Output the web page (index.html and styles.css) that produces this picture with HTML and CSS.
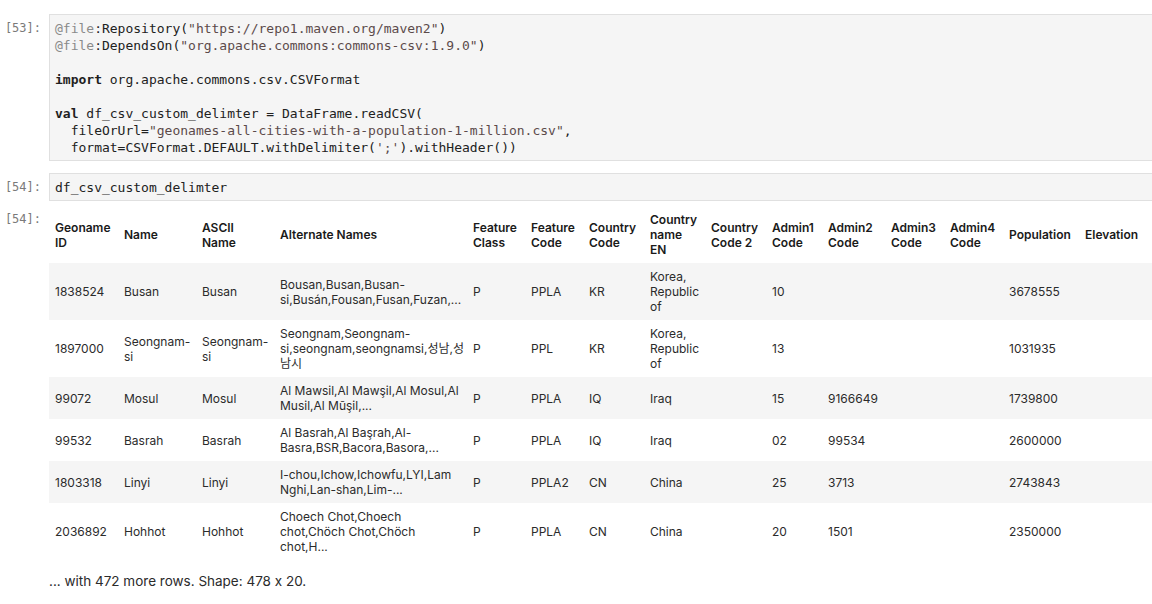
FILE: index.html
```html
<!DOCTYPE html>
<html lang="en">
<head>
<meta charset="utf-8">
<title>Notebook</title>
<link rel="stylesheet" href="styles.css">
</head>
<body>
<div class="notebook">
  <div class="cell">
    <div class="prompt">[53]:</div>
    <div class="input"><pre><span class="meta">@file</span>:Repository(<span class="str">"https://repo1.maven.org/maven2"</span>)
<span class="meta">@file</span>:DependsOn(<span class="str">"org.apache.commons:commons-csv:1.9.0"</span>)

<span class="kw">import</span> org.apache.commons.csv.CSVFormat

<span class="kw">val</span> df_csv_custom_delimter = DataFrame.readCSV(
  fileOrUrl=<span class="str">"geonames-all-cities-with-a-population-1-million.csv"</span>,
  format=CSVFormat.DEFAULT.withDelimiter(<span class="str">';'</span>).withHeader())</pre></div>
  </div>
  <div class="cell">
    <div class="prompt">[54]:</div>
    <div class="input"><pre>df_csv_custom_delimter</pre></div>
  </div>
  <div class="output">
    <div class="prompt out">[54]:</div>
    <div class="output-body">
      <table class="df">
        <colgroup>
          <col class="w69"><col class="w78"><col class="w78"><col class="w193"><col class="w58"><col class="w58"><col class="w61"><col class="w61"><col class="w61"><col class="w56"><col class="w63"><col class="w59"><col class="w59"><col class="w76"><col>
        </colgroup>
        <thead>
          <tr>
            <th>Geoname<br>ID</th><th>Name</th><th>ASCII<br>Name</th><th>Alternate Names</th><th>Feature<br>Class</th><th>Feature<br>Code</th><th>Country<br>Code</th><th>Country<br>name<br>EN</th><th>Country<br>Code 2</th><th>Admin1<br>Code</th><th>Admin2<br>Code</th><th>Admin3<br>Code</th><th>Admin4<br>Code</th><th>Population</th><th>Elevation</th>
          </tr>
        </thead>
        <tbody>
          <tr>
            <td>1838524</td><td>Busan</td><td>Busan</td><td>Bousan,Busan,Busan-<br>si,Busán,Fousan,Fusan,Fuzan,...</td><td>P</td><td>PPLA</td><td>KR</td><td>Korea,<br>Republic<br>of</td><td></td><td>10</td><td></td><td></td><td></td><td>3678555</td><td></td>
          </tr>
          <tr>
            <td>1897000</td><td>Seongnam-<br>si</td><td>Seongnam-<br>si</td><td>Seongnam,Seongnam-<br>si,seongnam,seongnamsi,성남,성<br>남시</td><td>P</td><td>PPL</td><td>KR</td><td>Korea,<br>Republic<br>of</td><td></td><td>13</td><td></td><td></td><td></td><td>1031935</td><td></td>
          </tr>
          <tr>
            <td>99072</td><td>Mosul</td><td>Mosul</td><td>Al Mawsil,Al Mawşil,Al Mosul,Al<br>Musil,Al Mūşil,...</td><td>P</td><td>PPLA</td><td>IQ</td><td>Iraq</td><td></td><td>15</td><td>9166649</td><td></td><td></td><td>1739800</td><td></td>
          </tr>
          <tr>
            <td>99532</td><td>Basrah</td><td>Basrah</td><td>Al Basrah,Al Başrah,Al-<br>Basra,BSR,Bacora,Basora,...</td><td>P</td><td>PPLA</td><td>IQ</td><td>Iraq</td><td></td><td>02</td><td>99534</td><td></td><td></td><td>2600000</td><td></td>
          </tr>
          <tr>
            <td>1803318</td><td>Linyi</td><td>Linyi</td><td>I-chou,Ichow,Ichowfu,LYI,Lam<br>Nghi,Lan-shan,Lim-...</td><td>P</td><td>PPLA2</td><td>CN</td><td>China</td><td></td><td>25</td><td>3713</td><td></td><td></td><td>2743843</td><td></td>
          </tr>
          <tr>
            <td>2036892</td><td>Hohhot</td><td>Hohhot</td><td>Choech Chot,Choech<br>chot,Chöch Chot,Chöch<br>chot,H...</td><td>P</td><td>PPLA</td><td>CN</td><td>China</td><td></td><td>20</td><td>1501</td><td></td><td></td><td>2350000</td><td></td>
          </tr>
        </tbody>
      </table>
      <p class="summary">... with 472 more rows. Shape: 478 x 20.</p>
    </div>
  </div>
</div>
</body>
</html>
```

FILE: styles.css
```css
html, body {
  margin: 0;
  padding: 0;
  background: #ffffff;
  overflow: hidden;
}

.notebook {
  padding-top: 14px;
  display: flex;
  flex-direction: column;
  gap: 12px;
}

.cell {
  display: flex;
  align-items: flex-start;
}

.prompt {
  flex: 0 0 49px;
  box-sizing: border-box;
  padding: 6px 8px 0 0;
  text-align: right;
  font-family: "DejaVu Sans Mono", monospace;
  font-size: 12px;
  line-height: 17px;
  color: #7a7a7a;
}

.input {
  flex: 1 1 auto;
  min-width: 0;
  background: #f5f5f5;
  border: 1px solid #e0e0e0;
  border-right: none;
  padding: 5px 0 4px 5px;
}

.input pre {
  margin: 0;
  font-family: "DejaVu Sans Mono", monospace;
  font-size: 13px;
  line-height: 17px;
  color: #212121;
  white-space: pre;
}

.meta { color: #8a8a8a; }
.str { color: #5b4a4a; }
.kw { font-weight: bold; color: #1f1f1f; }

.output {
  display: flex;
  align-items: flex-start;
  margin-top: -7px;
}

.prompt.out {
  padding-top: 5px;
}

.output-body {
  flex: 1 1 auto;
  min-width: 0;
  overflow: hidden;
}

.df {
  border-collapse: collapse;
  table-layout: fixed;
  width: 100%;
  font-family: Inter, "Noto Sans CJK KR", sans-serif;
  font-feature-settings: "calt" 0;
  font-size: 12px;
  line-height: 15px;
  color: #2b2b2b;
}

.df th, .df td {
  padding: 6px;
  text-align: left;
  vertical-align: middle;
  white-space: nowrap;
}

.df th {
  font-weight: 600;
  color: #1a1a1a;
}

.df tbody tr:nth-child(odd) {
  background: #f5f5f5;
}

.w56 { width: 56px; }
.w58 { width: 58px; }
.w59 { width: 59px; }
.w61 { width: 61px; }
.w63 { width: 63px; }
.w69 { width: 69px; }
.w76 { width: 76px; }
.w78 { width: 78px; }
.w193 { width: 193px; }

.summary {
  margin: 13px 0 0 0;
  font-family: Inter, sans-serif;
  font-feature-settings: "calt" 0;
  font-size: 13.5px;
  line-height: 16px;
  color: #2b2b2b;
}
```
